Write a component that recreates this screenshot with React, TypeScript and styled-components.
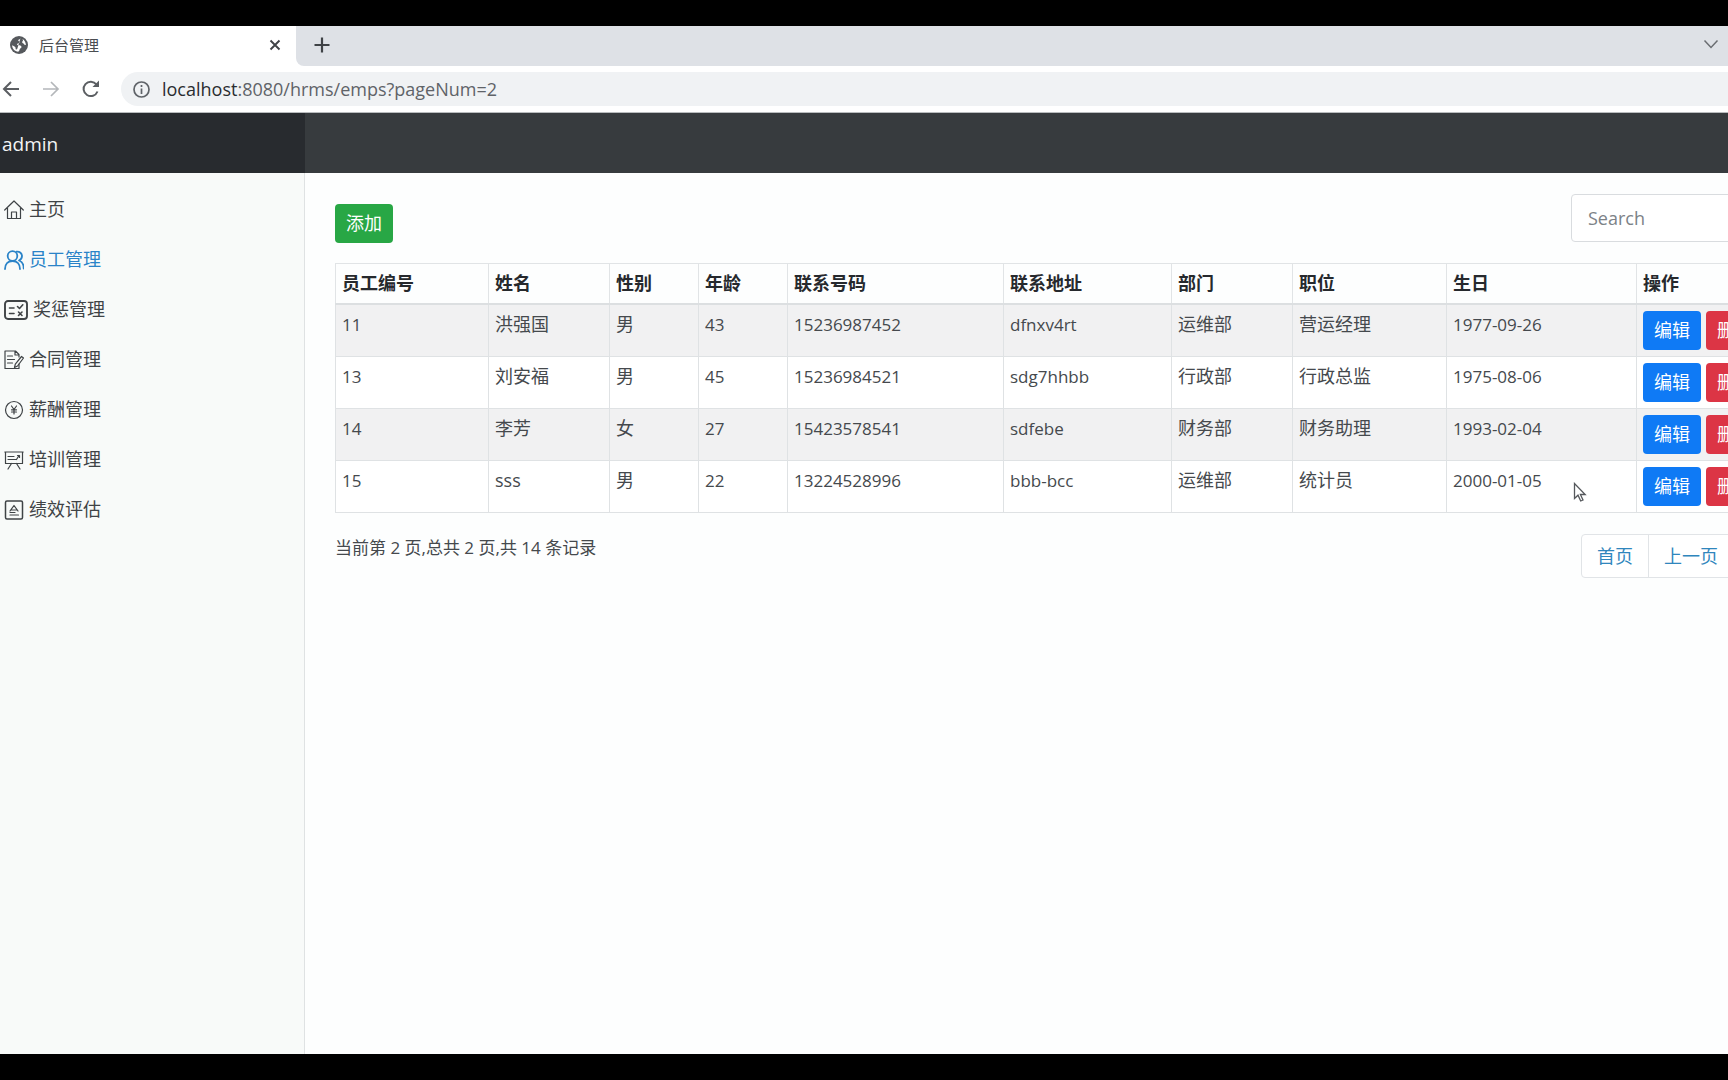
import React from "react";
import styled, { createGlobalStyle, css } from "styled-components";

const latin = `"Open Sans", "Noto Sans", "Noto Sans CJK SC", sans-serif`;

const GlobalStyle = createGlobalStyle`
  *, *::before, *::after { box-sizing: border-box; }
  body {
    margin: 0;
    background: #000;
    color: #45494d;
    font-family: ${latin};
    font-size: 18px;
    line-height: 27px;
    overflow: hidden;
  }
  button, input { font: inherit; }
  a { color: inherit; text-decoration: none; }
`;

const Screen = styled.div`
  display: flex;
  flex-direction: column;
  height: 100vh;
  padding: 26px 0;
  background: #000;
`;

const Browser = styled.div`
  display: flex;
  flex: 1;
  flex-direction: column;
  min-height: 0;
  overflow: hidden;
  background: #fdfefe;
`;

const TabStrip = styled.div`
  display: flex;
  height: 40px;
  background: #fff;
`;

const Tab = styled.div`
  display: flex;
  align-items: center;
  gap: 11px;
  width: 296px;
  padding: 0 12px 2px 10px;
  border-top-right-radius: 8px;
  background: #fff;
  color: #4a4d51;
  font-size: 15px;
`;

const TabTitle = styled.span`
  flex: 1;
`;

const StripRest = styled.div`
  display: flex;
  flex: 1;
  align-items: center;
  justify-content: space-between;
  padding: 0 8px 2px 16px;
  border-bottom-left-radius: 8px;
  background: #dee1e6;
`;

const IconButton = styled.button<{ $dim?: boolean }>`
  display: flex;
  padding: 0;
  border: 0;
  background: none;
  color: ${(p) => (p.$dim ? "#b4b7ba" : "#5b5e62")};
`;

const Toolbar = styled.div`
  display: flex;
  align-items: center;
  gap: 20px;
  height: 47px;
  padding-left: 1px;
  border-bottom: 1px solid #b9bcbe;
  background: #fff;
`;

const AddressBar = styled.div`
  display: flex;
  flex: 1;
  align-items: center;
  gap: 12px;
  height: 34px;
  padding-left: 12px;
  border-radius: 17px 0 0 17px;
  background: #f0f2f4;
  color: #5f6368;
  white-space: nowrap;
`;

const Host = styled.span`
  color: #292c30;
`;

const SiteHeader = styled.header`
  display: flex;
  height: 60px;
  background: #373b3e;
`;

const Brand = styled.a`
  display: flex;
  align-items: center;
  width: 305px;
  padding: 2px 0 0 2px;
  background: #282b2f;
  color: #f3f4f5;
  font-size: 19px;
`;

const Body = styled.div`
  display: flex;
  flex: 1;
  min-height: 0;
`;

const Sidebar = styled.nav`
  display: flex;
  flex: none;
  flex-direction: column;
  gap: 23px;
  width: 305px;
  padding: 23px 0 0 4px;
  border-right: 1px solid #dfe2e3;
  background: #f8faf9;
`;

const SideLink = styled.a<{ $active?: boolean }>`
  display: flex;
  align-items: center;
  gap: 5px;
  color: ${(p) => (p.$active ? "#2a83c8" : "#3f4346")};
`;

/* The page is wider than the window and runs off its right edge. */
const Main = styled.main`
  flex: 1;
  min-width: 0;
  margin-right: -68px;
  padding: 21px 0 0 30px;
`;

const Actions = styled.div`
  display: flex;
  align-items: center;
  justify-content: space-between;
  margin-bottom: 21px;
  height: 48px;
`;

const Button = styled.button<{ $color: string }>`
  height: 39px;
  padding: 0 11px;
  border: 0;
  border-radius: 4px;
  background: ${(p) => p.$color};
  color: #fff;
  white-space: nowrap;
`;

const AddButton = styled(Button)`
  align-self: flex-end;
  margin-bottom: -1px;
`;

const Search = styled.input`
  width: 225px;
  height: 48px;
  padding: 0 16px;
  border: 1px solid #d9dcdf;
  border-radius: 4px;
  background: #fff;
  font-size: 18px;
  outline: 0;
  &::placeholder { color: #7c8287; opacity: 1; }
`;

const Table = styled.table`
  width: 100%;
  border-collapse: collapse;
  table-layout: fixed;
`;

const Col = styled.col<{ $w?: number }>`
  ${(p) => p.$w && css`width: ${p.$w}px;`}
`;

const Th = styled.th`
  height: 40px;
  padding: 6px;
  border: 1px solid #e1e4e6;
  border-bottom: 2px solid #dcdfe1;
  color: #26292d;
  font-weight: 700;
  text-align: left;
`;

const Row = styled.tr`
  height: 52px;
  background: #fff;
  &:nth-child(odd) { background: #f1f1f2; }
`;

const Td = styled.td<{ $latin?: boolean }>`
  padding: 6px 6px 0;
  border: 1px solid #dfe2e4;
  font-size: ${(p) => (p.$latin ? 17 : 18)}px;
  vertical-align: top;
`;

const ButtonPair = styled.div`
  display: flex;
  gap: 5px;
`;

const Footer = styled.div`
  display: flex;
  justify-content: space-between;
  padding-top: 21px;
`;

const Summary = styled.p`
  margin: 0;
  font-size: 17px;
`;

const Pager = styled.div`
  display: flex;
  width: 215px;
`;

const PageLink = styled.a`
  height: 44px;
  padding: 8px 15px;
  border: 1px solid #e1e4e7;
  background: #fff;
  color: #2f86bd;
  & + & { margin-left: -1px; }
  &:first-child { border-radius: 4px 0 0 4px; }
`;

const Cursor = styled.svg`
  position: absolute;
  left: 1573px;
  top: 482px;
`;

const Glyph = ({ w = 20, sw = 1.2, children }: { w?: number; sw?: number; children: React.ReactNode }) => (
  <svg width={w} height={20} viewBox={`0 0 ${w} 20`} fill="none" stroke="currentColor" strokeWidth={sw} strokeLinecap="round" strokeLinejoin="round" aria-hidden="true">
    {children}
  </svg>
);

const icons = {
  home: <Glyph><path d="M.7 10 10 1l9.300 9M3.500 8v10.500h4V12h5v6.500M3.500 18.500h13V8" /></Glyph>,
  users: <Glyph sw={1.8}><circle cx="8.500" cy="6" r="4.800" /><path d="M1 19c0-4.800 3-8 7.500-8s7.500 3.200 7.500 8M12.500 1.600c3.300-.3 5.500 1.800 5.500 4.500 0 2-1.200 3.600-3 4.400 3 1 4.700 4 4.700 8" /></Glyph>,
  check: <Glyph w={24} sw={1.9}><rect x="1" y="1" width="22" height="18" rx="3" /><path d="M5.500 8H10M5.500 13.500H10M13.500 6.500l2 2 3.300-3.700M14.500 12l3.500 3.500m0-3.500-3.500 3.500" strokeWidth="1.600" /></Glyph>,
  contract: <Glyph><path d="M15 14v4.500H1V1h10.500L15 4.500V7M11 1v4h4M3.500 6h5M3.500 9.500h7M3.500 13h5" /><path d="m17.500 6.500 2 1.500-6 8-3 1.500.8-3.300 6.200-7.700Z" /></Glyph>,
  yen: <Glyph><circle cx="10" cy="10" r="8.500" /><path d="m7.500 6 2.500 3.500L12.500 6M7.500 9.800h5M7.500 12h5M10 9.500v4.500" /></Glyph>,
  board: <Glyph><path d="M.8 2h18.400M1.500 2v11.500h17V2M4 6.500h6M4 9.500h8M12.500 9.500l2.500-4M13.500 5.500h2v2M7.500 13.500l-3.500 5.500M12.500 13.500l3.500 5.500" /></Glyph>,
  score: <Glyph><rect x="1.500" y="1" width="17" height="18" rx="1.500" strokeWidth="1.500" /><path d="m6 11 4-5.500 4 5.500M7 10h6M6 12.500h5M6 15h8.500" /></Glyph>,
};

const menu: { label: string; icon: keyof typeof icons; active?: boolean }[] = [
  { label: "主页", icon: "home" },
  { label: "员工管理", icon: "users", active: true },
  { label: "奖惩管理", icon: "check" },
  { label: "合同管理", icon: "contract" },
  { label: "薪酬管理", icon: "yen" },
  { label: "培训管理", icon: "board" },
  { label: "绩效评估", icon: "score" },
];

const columns: { title: string; width?: number; latin?: boolean }[] = [
  { title: "员工编号", width: 153, latin: true },
  { title: "姓名", width: 121 },
  { title: "性别", width: 89 },
  { title: "年龄", width: 89, latin: true },
  { title: "联系号码", width: 216, latin: true },
  { title: "联系地址", width: 168, latin: true },
  { title: "部门", width: 121 },
  { title: "职位", width: 154 },
  { title: "生日", width: 190, latin: true },
  { title: "操作" },
];

const employees = [
  ["11", "洪强国", "男", "43", "15236987452", "dfnxv4rt", "运维部", "营运经理", "1977-09-26"],
  ["13", "刘安福", "男", "45", "15236984521", "sdg7hhbb", "行政部", "行政总监", "1975-08-06"],
  ["14", "李芳", "女", "27", "15423578541", "sdfebe", "财务部", "财务助理", "1993-02-04"],
  ["15", "sss", "男", "22", "13224528996", "bbb-bcc", "运维部", "统计员", "2000-01-05"],
];

export default function App() {
  return (
    <Screen>
      <GlobalStyle />
      <Browser>
        <TabStrip>
          <Tab>
            <svg width="18" height="18" viewBox="0 0 18 18" aria-hidden="true">
              <circle cx="9" cy="9" r="9" fill="#56595d" />
              <path d="M10.500 2.200c-.5 1.300-2.300 1-2.300 2.300 0 1 1.500.7 1.500 1.700 0 1.300-2.200.8-2.600 2-.2.8.6 1 1.700 1 1.500 0 2.700.5 2.700 1.800 0 1.200-1.700 1.200-1.900 2.500-.1.900-.6 1.800-1.400 2.200C4.800 15.400 2.200 12.600 2.100 9.200c1.300.8 2.800 1.100 3.400 2.200.3.600-.2 1.400.5 2 .8.500 1.400-.4 1.500-1.300" fill="#fff" />
              <path d="M12.500 3c2 1.200 3.400 3.400 3.400 6-.9.300-1.700-.1-2-1-.3-.8-1.700-.6-1.800-1.700-.1-1 1-1.200.9-2 0-.5-.5-.8-.5-1.300Z" fill="#fff" />
            </svg>
            <TabTitle>后台管理</TabTitle>
            <IconButton aria-label="关闭">
              <svg width="18" height="18" viewBox="0 0 18 18" stroke="#3f4246" strokeWidth="1.900"><path d="m4.500 4.500 9 9m0-9-9 9" /></svg>
            </IconButton>
          </Tab>
          <StripRest>
            <IconButton aria-label="新标签页">
              <svg width="20" height="20" viewBox="0 0 20 20" stroke="#3f4246" strokeWidth="2.200"><path d="M10 2.500v15M2.500 10h15" /></svg>
            </IconButton>
            <IconButton aria-label="搜索标签页">
              <svg width="18" height="18" viewBox="0 0 18 18" fill="none" stroke="#6a6d71" strokeWidth="1.500"><path d="m2.500 4.500 6.500 7 6.500-7" /></svg>
            </IconButton>
          </StripRest>
        </TabStrip>
        <Toolbar>
          <IconButton aria-label="后退">
            <svg width="20" height="20" viewBox="0 0 20 20" fill="none" stroke="currentColor" strokeWidth="2"><path d="M18 10H3M10 3l-7 7 7 7" /></svg>
          </IconButton>
          <IconButton aria-label="前进" $dim>
            <svg width="20" height="20" viewBox="0 0 20 20" fill="none" stroke="currentColor" strokeWidth="1.700"><path d="M2 10h15M10 3l7 7-7 7" /></svg>
          </IconButton>
          <IconButton aria-label="重新加载">
            <svg width="20" height="20" viewBox="0 0 20 20" fill="none" stroke="currentColor" strokeWidth="2"><path d="M16.500 12.500A7.200 7.200 0 1 1 15.500 5.500" /><path d="M18 1.500V8h-6.500Z" fill="currentColor" stroke="none" /></svg>
          </IconButton>
          <AddressBar>
            <svg width="17" height="17" viewBox="0 0 17 17" fill="none" stroke="currentColor" strokeWidth="1.700" aria-hidden="true"><circle cx="8.500" cy="8.500" r="7.500" /><path d="M8.500 7.500V13M8.500 4v2" /></svg>
            <span><Host>localhost</Host>:8080/hrms/emps?pageNum=2</span>
          </AddressBar>
        </Toolbar>
        <SiteHeader>
          <Brand href="#">admin</Brand>
        </SiteHeader>
        <Body>
          <Sidebar>
            {menu.map((m) => (
              <SideLink key={m.label} href="#" $active={m.active}>
                {icons[m.icon]}
                {m.label}
              </SideLink>
            ))}
          </Sidebar>
          <Main>
            <Actions>
              <AddButton $color="#28a745">添加</AddButton>
              <Search type="text" placeholder="Search" aria-label="Search" />
            </Actions>
            <Table>
              <colgroup>
                {columns.map((c) => <Col key={c.title} $w={c.width} />)}
              </colgroup>
              <thead>
                <tr>{columns.map((c) => <Th key={c.title} scope="col">{c.title}</Th>)}</tr>
              </thead>
              <tbody>
                {employees.map((e) => (
                  <Row key={e[0]}>
                    {e.map((value, i) => <Td key={i} $latin={columns[i].latin}>{value}</Td>)}
                    <Td>
                      <ButtonPair>
                        <Button $color="#0f7af5">编辑</Button>
                        <Button $color="#dc3545">删除</Button>
                      </ButtonPair>
                    </Td>
                  </Row>
                ))}
              </tbody>
            </Table>
            <Footer>
              <Summary>当前第 2 页,总共 2 页,共 14 条记录</Summary>
              <Pager>
                <PageLink href="#">首页</PageLink>
                <PageLink href="#">上一页</PageLink>
              </Pager>
            </Footer>
          </Main>
        </Body>
      </Browser>
      <Cursor width="14" height="21" viewBox="0 0 14 21" aria-hidden="true">
        <path d="M1.500 1.500v15l3.500-3.300 2.700 5.800 2.300-1-2.600-5.500h4.800Z" fill="#fff" stroke="#55585c" strokeWidth="1.300" />
      </Cursor>
    </Screen>
  );
}
